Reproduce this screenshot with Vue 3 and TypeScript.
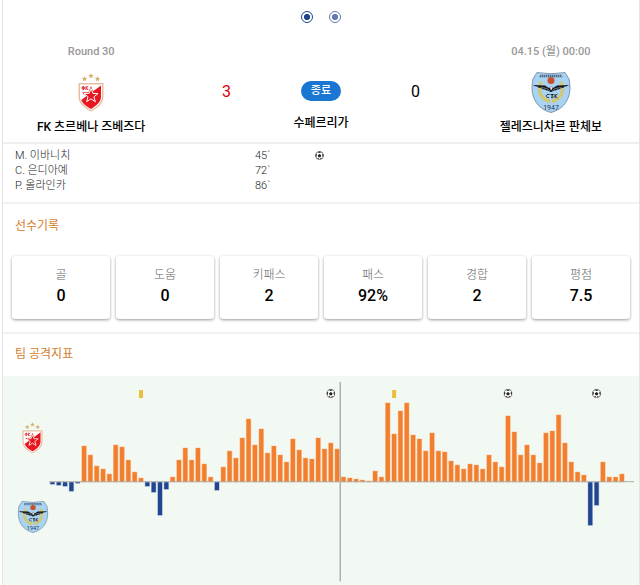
<script setup lang="ts">
import { ref } from 'vue'

interface GoalEvent {
  player: string
  minute: string
  icon: boolean
}

interface Stat {
  label: string
  value: string
}

interface Marker {
  slot: number
  kind: 'card' | 'goal'
}

const slide = ref<string>('first')

const goals: GoalEvent[] = [
  { player: 'M. 이바니치', minute: '45`', icon: true },
  { player: 'C. 은디아예', minute: '72`', icon: false },
  { player: 'P. 올라인카', minute: '86`', icon: false },
]

const stats: Stat[] = [
  { label: '골', value: '0' },
  { label: '도움', value: '0' },
  { label: '키패스', value: '2' },
  { label: '패스', value: '92%' },
  { label: '경합', value: '2' },
  { label: '평점', value: '7.5' },
]

// Attack index per minute: positive for the home side, negative for the away side.
const attack: number[] = [
  -2, -3, -4, -9, -1, 36, 27, 16, 13, 8, 37, 35, 22, 10, 4, -4, -10, -33, -7,
  5, 22, 34, 22, 34, 18, 5, -8, 15, 31, 24, 44, 63, 37, 53, 29, 36, 27, 20,
  43, 32, 24, 23, 44, 33, 39, 33, 5, 4, 3, 2, 1, 11, 5, 79, 48, 71, 79, 47,
  43, 31, 49, 31, 30, 21, 17, 13, 18, 17, 13, 27, 20, 15, 66, 50, 27, 37, 27,
  19, 49, 51, 67, 39, 20, 10, 7, -43, -23, 20, 5, 5, 8,
]

const markers: Marker[] = [
  { slot: 14, kind: 'card' },
  { slot: 44, kind: 'goal' },
  { slot: 54, kind: 'card' },
  { slot: 72, kind: 'goal' },
  { slot: 86, kind: 'goal' },
]

const pitch = 6.317
const baseline = 100
const center = (slot: number): number => 3.4 + slot * pitch
</script>

<template>
  <svg class="symbols" aria-hidden="true">
    <symbol id="crest-home" viewBox="0 0 52 78">
      <g fill="#d3ae6c">
        <path id="star" d="M26 0l1.6 3.8 4.1.3-3.2 2.6 1 4-3.5-2.2-3.5 2.2 1-4-3.2-2.6 4.1-.3z" />
        <use href="#star" x="-13" y="6" />
        <use href="#star" x="13" y="6" />
      </g>
      <path d="M1 20h50v28c0 13-12 22-25 29C13 70 1 61 1 48z" fill="#e9bfa0" />
      <path d="M4 23h44v25c0 11-10 19-22 26C14 67 4 59 4 48z" fill="#fff" />
      <path d="M46 25v23c0 10-9 17-20 24C17 67 9 61 6.500 54z" fill="#e8161f" />
      <path d="M26 26l4.700 12.500 13.300.600-10.500 8.200 3.600 12.800L26 52.700l-11.100 7.400 3.600-12.800L8 39.100l13.300-.6z" fill="#e8161f" />
      <path d="M26 31l3.700 9.700 10.300.500-8.100 6.300 2.800 9.900L26 51.700l-8.700 5.700 2.800-9.900L12 41.200l10.300-.5z" fill="none" stroke="#fff" stroke-width="2" />
      <g fill="none" stroke="#d8232b" stroke-width="2">
        <circle cx="10.500" cy="30" r="2.500" />
        <path d="M10.500 26v8M16 26v8M20.500 26l-4 4 4 4" />
      </g>
    </symbol>

    <symbol id="crest-away" viewBox="0 0 80 82">
      <path d="M12 1q28 5 56 0l8 13c8 38-10 60-36 67C14 74-4 52 4 14z" fill="#a9d3f2" stroke="#5f7896" stroke-width="1.500" />
      <path d="M18 6.500h44M17 9.500h46" stroke="#394b65" stroke-width="2" stroke-dasharray="3 1" />
      <circle cx="40" cy="17" r="7" fill="#c8502b" />
      <g fill="none" stroke="#dcc558" stroke-width="7" stroke-dasharray="4 1">
        <path d="M21 20c-9 18-1 34 17 39" />
        <path d="M59 20c9 18 1 34-17 39" />
      </g>
      <path d="M4 26l24 1 8 5 4-3 4 3 8-5 24-1c-3 3-7 3-9 3 0 3-5 3-7 3-2 3-5 3-8 3-2 2-4 2-6 2l-5 3h-2l-5-3c-2 0-4 0-6-2-3 0-6 0-8-3-2 0-7 0-7-3-2 0-6 0-9-3z" fill="#17191d" />
      <path d="M19 31l13 2 5 4M61 31l-13 2-5 4" fill="none" stroke="#87939e" stroke-width="1.500" />
      <path d="M38 31l2-2 3 3-3 5z" fill="#eef3f7" />
      <path d="M37 45c-8-2-9 7-1 6M39 45h6l-4 3c6 0 4 5-1 3M48 44v8M53 44l-5 4 5 4" fill="none" stroke="#222a36" stroke-width="2" />
    </symbol>

    <symbol id="ball" viewBox="0 0 18 18">
      <circle cx="9" cy="9" r="8" fill="#fff" stroke="#555" stroke-width="1.500" />
      <path d="M9 6l3.500 2.500-1.300 4h-4.400L5.500 8.500zM5 2l4-1 4 1-4 2zM1 7l2.500-1 0 4-2 2zM17 7l-2.500-1 0 4 2 2zM4 14l3 0 1 3zM14 14l-3 0-1 3z" fill="#222" />
    </symbol>
  </svg>

  <main class="match">
    <div class="pager" role="radiogroup" aria-label="경기">
      <input v-model="slide" type="radio" name="slide" value="first" aria-label="1" />
      <input v-model="slide" type="radio" name="slide" value="second" aria-label="2" />
    </div>

    <header class="scoreboard">
      <section class="team">
        <p class="meta">Round 30</p>
        <svg class="crest home"><use href="#crest-home" /></svg>
        <h2>FK 츠르베나 즈베즈다</h2>
      </section>
      <p class="score winner">3</p>
      <section class="status">
        <span class="badge">종료</span>
        <p class="league">수페르리가</p>
      </section>
      <p class="score">0</p>
      <section class="team">
        <p class="meta">04.15 (월) 00:00</p>
        <svg class="crest away" viewBox="0 0 80 82">
          <use href="#crest-away" width="80" height="82" />
          <text class="founded" x="40" y="75">1947</text>
        </svg>
        <h2>젤레즈니차르 판체보</h2>
      </section>
    </header>

    <ul class="goals">
      <li v-for="goal in goals" :key="goal.minute">
        <span>{{ goal.player }}</span>
        <span>{{ goal.minute }}</span>
        <svg v-if="goal.icon" class="ball"><use href="#ball" /></svg>
      </li>
    </ul>

    <section class="records">
      <h3>선수기록</h3>
      <dl>
        <div v-for="stat in stats" :key="stat.label" class="stat">
          <dt>{{ stat.label }}</dt>
          <dd>{{ stat.value }}</dd>
        </div>
      </dl>
    </section>

    <section class="attack">
      <h3>팀 공격지표</h3>
      <div class="panel">
        <div class="sides">
          <svg class="crest home small"><use href="#crest-home" /></svg>
          <svg class="crest away small" viewBox="0 0 80 82">
            <use href="#crest-away" width="80" height="82" />
            <text class="founded" x="40" y="75">1947</text>
          </svg>
        </div>
        <svg class="chart" viewBox="0 0 584 200" role="img" aria-label="팀 공격지표">
          <template v-for="(value, slot) in attack" :key="slot">
            <rect
              :x="center(slot) - 2.700"
              :y="value > 0 ? baseline - value - 0.500 : baseline"
              width="5.400"
              :height="Math.abs(value) + 0.500"
              :class="value > 0 ? 'halo-home' : 'halo-away'"
            />
            <rect
              :x="center(slot) - 2.100"
              :y="value > 0 ? baseline - value : baseline"
              width="4.200"
              :height="Math.abs(value)"
              :class="value > 0 ? 'bar-home' : 'bar-away'"
            />
          </template>
          <rect class="axis" x="0" y="99" width="584" height="1" />
          <rect class="half" x="290" y="0" width="1.500" height="199" />
          <template v-for="marker in markers" :key="marker.slot">
            <rect v-if="marker.kind === 'card'" class="card" :x="center(marker.slot) - 2" y="8" width="4" height="8" />
            <use v-else href="#ball" :x="center(marker.slot) - 4.500" y="7" width="9" height="9" />
          </template>
        </svg>
      </div>
    </section>
  </main>
</template>

<style>
body {
  margin: 0;
  background: #fff;
}
</style>

<style scoped>
.symbols {
  position: absolute;
  width: 0;
  height: 0;
}

.match {
  margin-left: 2px;
  border: solid #e4e4e4;
  border-width: 0 1px;
  background: #fff;
  color: #000;
  font-family: Roboto, "Noto Sans CJK KR", sans-serif;
  font-size: 12px;
}

p, h2, h3, ul, dl, dd {
  margin: 0;
  padding: 0;
}

.pager {
  display: flex;
  justify-content: center;
  gap: 16px;
  padding-top: 11px;
}

.pager input {
  appearance: none;
  box-sizing: border-box;
  width: 12px;
  height: 12px;
  margin: 0;
  border: 1px solid #1f4590;
  border-radius: 50%;
  background: radial-gradient(circle closest-side, #1f4590 55%, #fff 70%);
}

.pager input:not(:checked) {
  opacity: 0.7;
}

.scoreboard {
  display: grid;
  grid-template-columns: 28fr 15fr 15fr 15fr 28fr;
  padding: 21px 0 7px;
  border-bottom: 2px solid #eee;
  text-align: center;
}

.team {
  display: flex;
  flex-direction: column;
  align-items: center;
}

.meta {
  height: 28px;
  color: #999;
  font-size: 11px;
  font-weight: 500;
  line-height: 16px;
}

.crest {
  display: block;
  width: 40px;
  height: 41px;
}

.crest.home {
  width: 26px;
}

.crest.small {
  width: 32px;
  height: 32px;
}

.crest.home.small {
  width: 21px;
}

.founded {
  fill: #24384f;
  font-size: 14px;
  text-anchor: middle;
}

h2 {
  margin-top: 6px;
  font-size: 12px;
  font-weight: 500;
  line-height: 16px;
}

.score {
  padding-top: 38px;
  font-size: 16px;
  line-height: 20px;
}

.winner {
  color: #e00000;
}

.status {
  display: flex;
  flex-direction: column;
  align-items: center;
  gap: 14px;
  padding-top: 37px;
}

.badge {
  padding: 0 10px;
  border-radius: 10px;
  background: #1976d2;
  color: #fff;
  font-size: 11px;
  font-weight: 500;
  line-height: 20px;
}

.league {
  font-size: 12px;
  font-weight: 500;
  line-height: 16px;
}

.goals {
  padding: 4px 12px 9px;
  border-bottom: 2px solid #f2f2f2;
  list-style: none;
}

.goals li {
  display: grid;
  grid-template-columns: 20fr 5fr 26fr;
  align-items: center;
  color: #222;
  font-size: 11px;
  font-weight: 300;
  line-height: 15px;
}

.ball {
  width: 9px;
  height: 9px;
}

h3 {
  padding: 0 12px;
  color: #d4802f;
  font-size: 12px;
  font-weight: 400;
  line-height: 16px;
}

.records {
  padding: 14px 0 13px;
  border-bottom: 2px solid #f2f2f2;
}

dl {
  display: grid;
  grid-template-columns: repeat(6, 1fr);
  gap: 6px;
  padding: 22px 9px 0;
}

.stat {
  padding: 10px 0 11px;
  border-radius: 3px;
  box-shadow: 0 1px 3px rgba(0, 0, 0, 0.4);
  text-align: center;
}

dt {
  color: #666;
  font-size: 12px;
  font-weight: 300;
  line-height: 18px;
}

dd {
  font-size: 16px;
  font-weight: 500;
  line-height: 24px;
}

.attack {
  padding-top: 12px;
}

.panel {
  display: flex;
  margin-top: 14px;
  padding: 6px 5px 3px 0;
  background: #f2f9f2;
}

.sides {
  display: flex;
  flex: none;
  flex-direction: column;
  align-items: center;
  gap: 47px;
  box-sizing: border-box;
  width: 46px;
  padding: 40px 0 0 13px;
}

.chart {
  display: block;
  flex: 1;
  min-width: 0;
}

.bar-home {
  fill: #f27f2f;
}

.bar-away {
  fill: #21468f;
}

.halo-home {
  fill: #fbc79d;
}

.halo-away {
  fill: #b9c8e0;
}

.axis {
  fill: #b0aea8;
}

.half {
  fill: #aeb2ae;
}

.card {
  fill: #eac03a;
}
</style>
